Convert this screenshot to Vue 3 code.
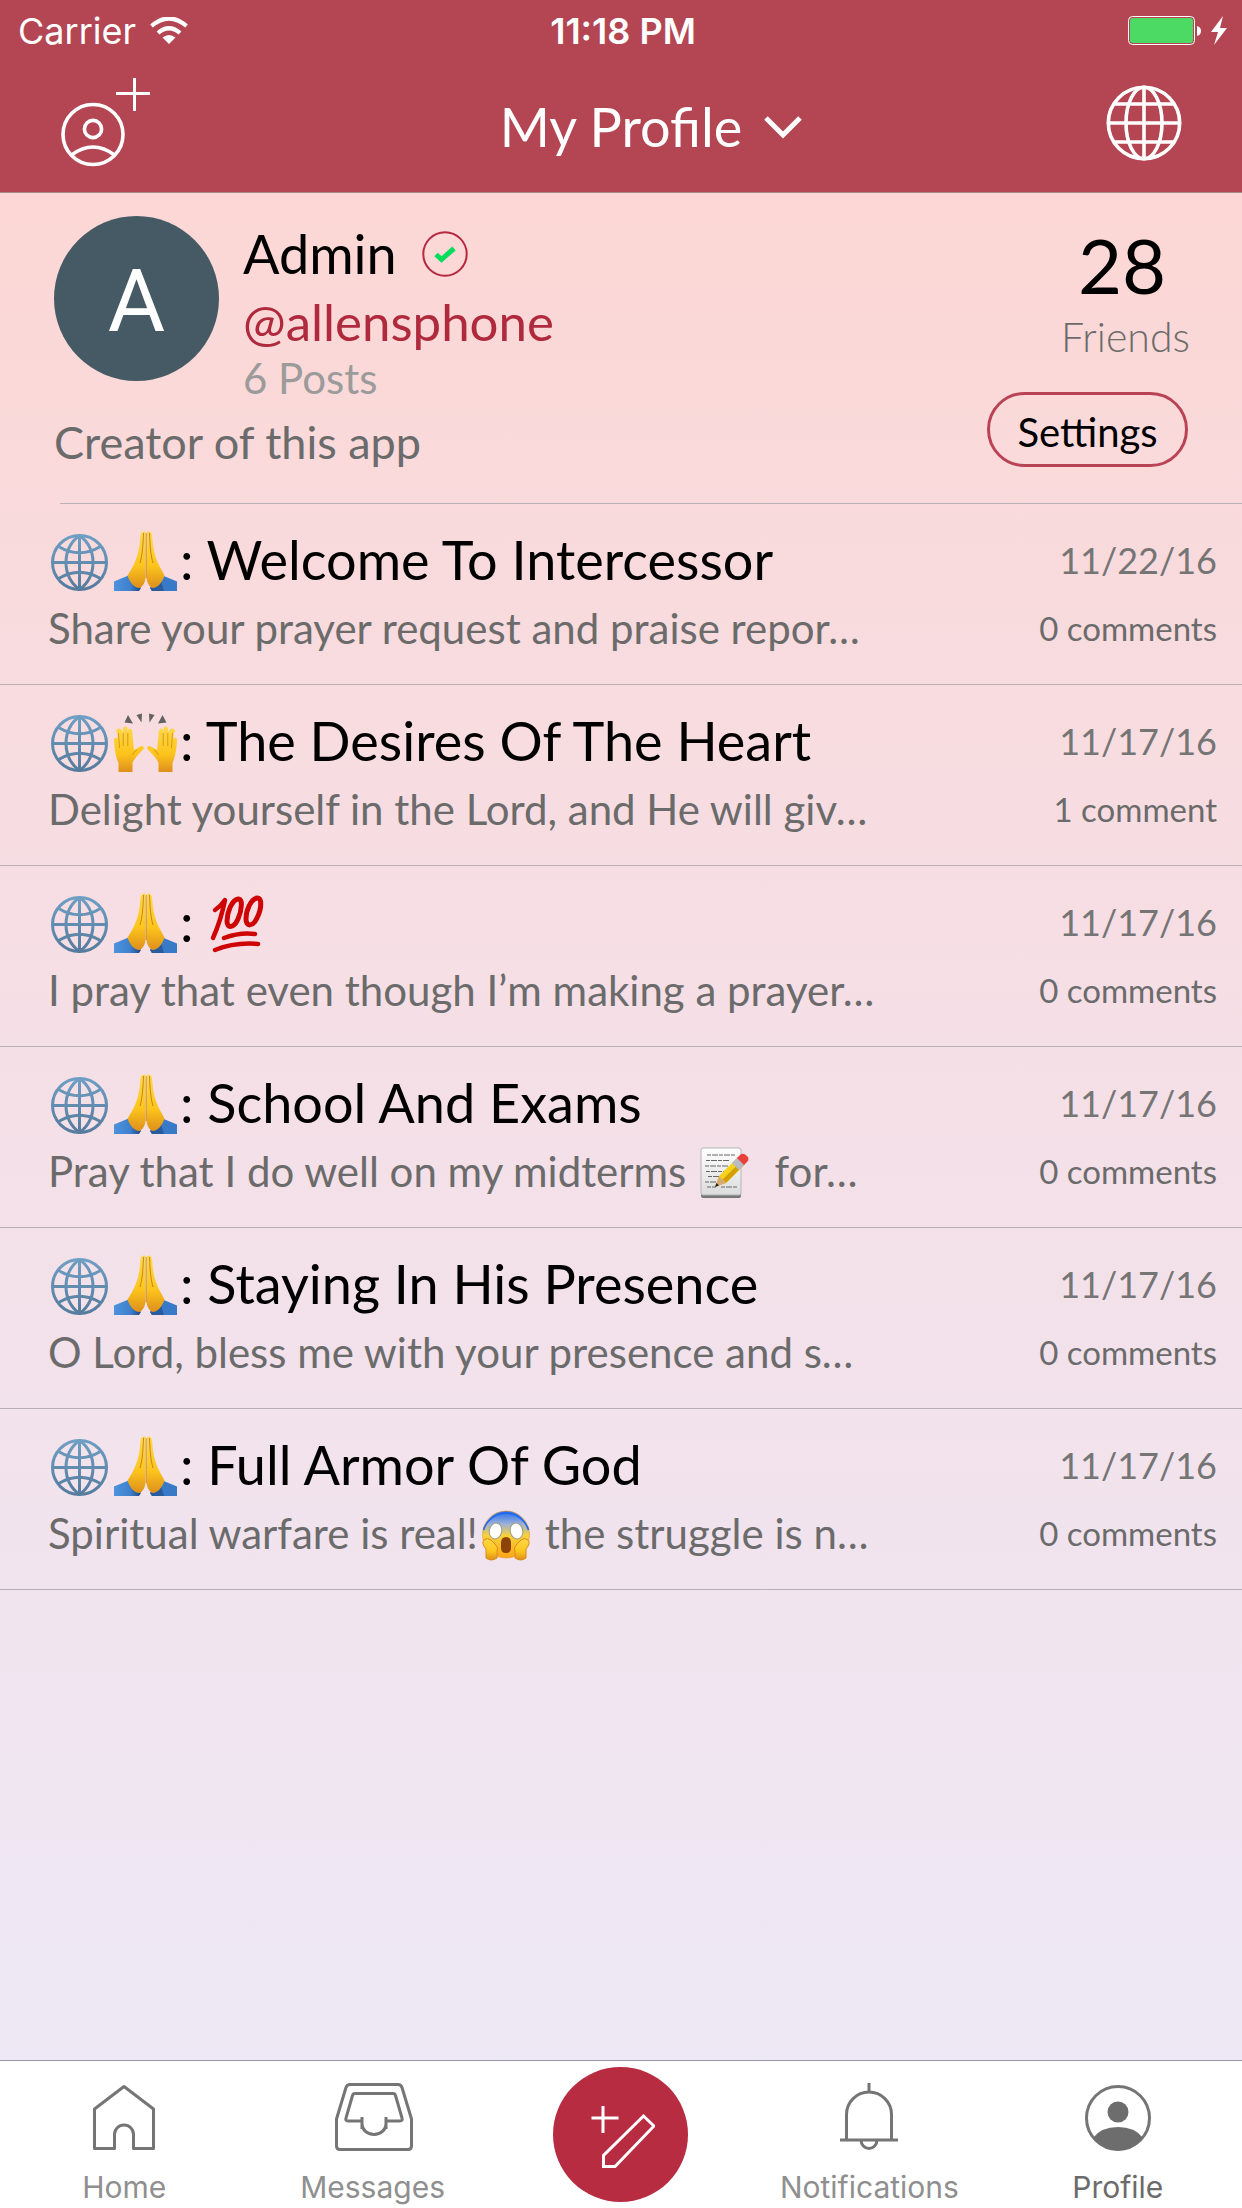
<script setup>
const posts = [
  { kind: 'pray', title: 'Welcome To Intercessor', text: ['Share your prayer request and praise repor…'], date: '11/22/16', comments: '0 comments' },
  { kind: 'praise', title: 'The Desires Of The Heart', text: ['Delight yourself in the Lord, and He will giv…'], date: '11/17/16', comments: '1 comment' },
  { kind: 'pray', title: '', emoji: 'hundred', text: ['I pray that even though I’m making a prayer…'], date: '11/17/16', comments: '0 comments' },
  { kind: 'pray', title: 'School And Exams', text: ['Pray that I do well on my midterms ', ' \u00a0for…'], emojiInText: 'memo', date: '11/17/16', comments: '0 comments' },
  { kind: 'pray', title: 'Staying In His Presence', text: ['O Lord, bless me with your presence and s…'], date: '11/17/16', comments: '0 comments' },
  { kind: 'pray', title: 'Full Armor Of God', text: ['Spiritual warfare is real!', ' the struggle is n…'], emojiInText: 'scream', date: '11/17/16', comments: '0 comments' },
]
</script>

<template>
  <div class="screen">
    <svg class="sprites" aria-hidden="true">
      <defs>
        <linearGradient id="skin" x1="0" y1="0" x2="0" y2="1">
          <stop offset="0" stop-color="#ffd84a" /><stop offset="0.6" stop-color="#fdc51c" /><stop offset="1" stop-color="#dd8f1c" />
        </linearGradient>
        <linearGradient id="sleeve" x1="0" y1="0" x2="1" y2="0">
          <stop offset="0" stop-color="#4d92dc" /><stop offset="0.6" stop-color="#3f80cd" /><stop offset="1" stop-color="#1d4683" />
        </linearGradient>
        <linearGradient id="steel" gradientUnits="userSpaceOnUse" x1="0" y1="7" x2="0" y2="62">
          <stop offset="0" stop-color="#6f9fc4" /><stop offset="1" stop-color="#557b9d" />
        </linearGradient>
        <linearGradient id="face" x1="0" y1="0" x2="0" y2="1">
          <stop offset="0" stop-color="#1f6df0" /><stop offset="0.28" stop-color="#9fb0d8" /><stop offset="0.52" stop-color="#f7d33a" /><stop offset="1" stop-color="#fba51b" />
        </linearGradient>
        <linearGradient id="paper" x1="0" y1="0" x2="0" y2="1">
          <stop offset="0" stop-color="#ffffff" /><stop offset="1" stop-color="#dcdcdc" />
        </linearGradient>
      </defs>
      <symbol id="globe" viewBox="0 0 63 64">
        <g fill="none" stroke="url(#steel)" stroke-width="3">
          <circle cx="31.5" cy="34.500" r="27" />
          <path d="M4.500 34.500H58.500M31.500 7V62" />
          <path d="M31.500 7.300C13.500 21 13.500 48 31.500 61.700M31.500 7.300C49.500 21 49.500 48 31.500 61.700" />
          <path d="M10.500 18.500Q31.500 31 52.500 18.500M10.500 50.500Q31.500 38 52.500 50.500" />
        </g>
      </symbol>
      <symbol id="pray" viewBox="0 0 63 64">
        <path d="M0 53.500L14.500 47.500L27 60L25 63H0z" fill="url(#sleeve)" />
        <path d="M63 53.500L48.500 47.500L36 60L38 63H63z" fill="#397ac8" />
        <path d="M36 60L46 50L50 63H38z" fill="#285c9f" />
        <path d="M31.500 4C28 2.500 26.500 5 26.300 9C25.500 24 22 33 17.500 41L13.500 47.500C16 55 20 59.500 25.500 60C29.500 58 31 54 31.500 50z" fill="url(#skin)" />
        <path d="M33 4C36.500 2.500 38 5 38.200 9C39 24 42.500 33 47 41L50.500 47.500C48 55 44 59.500 38.500 60C34.500 58 33 54 32.500 50z" fill="url(#skin)" />
        <path d="M32.200 5V50M29.500 5C29 20 28 28 26 35M35.500 5C36 20 37 28 39 35" fill="none" stroke="#a85f0c" stroke-width="1" opacity="0.65" />
      </symbol>
      <symbol id="praise" viewBox="0 0 63 64">
        <path d="M14 6L10.500 13.500L19 14.500zM22.500 6L28 4.500L27.500 13.500zM35 4.500L40.500 6L35.500 13.500zM48.500 6L44 14.500L52.500 13.500z" fill="#626262" />
        <g id="hand">
          <path d="M4.500 63V54C1.500 48 0 36 0 30Q1.500 27.500 3.500 30V25Q0 20 5.500 19.500Q8 20 9 24V19Q11.500 15.500 13.500 19V24Q14 18 17 20Q19 22 18.500 27L20 41L27 37Q31 37 29.500 40L23 47Q19 52 18.500 54V63z" fill="url(#skin)" />
          <path d="M4.500 24L5.500 39M9.200 24V37M13.800 24V37M18.500 46Q20 42 23 41" fill="none" stroke="#c57b0d" stroke-width="1" opacity="0.65" />
        </g>
        <use href="#hand" transform="matrix(-1 0 0 1 63 0)" />
      </symbol>
      <symbol id="hundred" viewBox="0 0 63 64">
        <g fill="none" stroke="#cf0505" stroke-linecap="round" stroke-linejoin="round">
          <path d="M9 20Q15 16 19 10Q15 30 7 48" stroke-width="4.500" />
          <path d="M32 9C26 10 21 22 21 31C21 39 28 38 32 29C36 20 37 8 32 9zM51 8C45 9 40 20 40 29C40 37 47 37 51 28C56 18 56 7 51 8z" stroke-width="5" />
          <path d="M18 48Q34 42 49 44M9 60Q29 52 52 54" stroke-width="4.500" />
        </g>
      </symbol>
      <symbol id="memo" viewBox="0 0 52 52">
        <rect x="2" y="2" width="40" height="49" rx="2" fill="#777" />
        <rect x="2" y="1" width="40" height="47" rx="2" fill="url(#paper)" stroke="#b5b5b5" stroke-width="1" />
        <path d="M8 8H36M7 13.500H31M6 19H30M7 24.500H25M9 29.500H23M6 35H20M8 40H17M22 40H38" stroke="#666" stroke-width="1.200" stroke-dasharray="4 1 6 1" />
        <path d="M16 40L20 29L39 10L46 17L27 36z" fill="#f6d21f" />
        <path d="M23.500 32.500L43 13.500L46 17L27 36z" fill="#d3a006" />
        <path d="M16 40L20 29L27 36z" fill="#d7ad74" /><path d="M16 40L17.500 36L20 38.500z" fill="#222" />
        <path d="M33 16L39 10L46 17L40 23z" fill="#b6bcc2" />
        <path d="M38 11L41 8Q44 5 48 9Q51 12 48 15L45 18z" fill="#e8413c" />
      </symbol>
      <symbol id="scream" viewBox="0 0 52 52">
        <circle cx="26" cy="25.500" r="23.500" fill="url(#face)" stroke="#ef961f" stroke-width="0.600" />
        <path d="M3.500 21A23.500 23.500 0 0 1 48.500 21" fill="none" stroke="#1d66ee" stroke-width="1.500" />
        <ellipse cx="15.500" cy="22" rx="6.200" ry="8" transform="rotate(12 15.500 22)" fill="#fff" stroke="#a29b86" />
        <ellipse cx="36.500" cy="22" rx="6.200" ry="8" transform="rotate(-12 36.500 22)" fill="#fff" stroke="#a29b86" />
        <path d="M21 34Q21 28 26 28Q31 28 31 34V39Q31 44 26 44Q21 44 21 39z" fill="#8d4306" />
        <path d="M6 49V40Q1 34 4 31Q7 28 11 31L15 35Q19 39 17 43V49Q11 53 6 49zM46 49V40Q51 34 48 31Q45 28 41 31L37 35Q33 39 35 43V49Q41 53 46 49z" fill="url(#skin)" stroke="#dc8a17" stroke-width="1" />
      </symbol>
    </svg>

    <header class="top">
      <div class="status">
        <span class="carrier">
          Carrier
          <svg width="38" height="28" viewBox="0 0 38 28" aria-label="Wi-Fi">
            <path d="M1.500 9Q19 -6 36.500 9M8 16Q19 6.500 30 16" fill="none" stroke="#fff" stroke-width="4.200" />
            <path d="M12.500 20.500Q19 15.500 25.500 20.500L19 27z" fill="#fff" />
          </svg>
        </span>
        <time class="clock">11:18 PM</time>
        <svg class="battery" width="100" height="30" viewBox="0 0 100 30" aria-label="Battery charging">
          <rect x="0.500" y="0.500" width="66" height="28" rx="4" fill="none" stroke="#fff" />
          <rect x="2" y="2" width="63" height="25" rx="3" fill="#4cd964" />
          <path d="M69 10Q73 11 73 15Q73 19 69 20z" fill="#fff" />
          <path d="M95 0L83 16H90L86 29L99 12H92z" fill="#fff" />
        </svg>
      </div>
      <nav class="bar">
        <button class="icon-btn" aria-label="Add friend">
          <svg width="92" height="92" viewBox="0 0 92 92" fill="none" stroke="#fff" stroke-width="3.600">
            <circle cx="33" cy="57.500" r="30" /><circle cx="33" cy="52" r="8.600" />
            <path d="M11.500 78Q33 62 54.500 78" /><path d="M74.500 1V34M56 16.500H90" stroke-width="3" />
          </svg>
        </button>
        <button class="title">
          My Profile
          <svg width="38" height="24" viewBox="0 0 38 24" fill="none" stroke="#fff" stroke-width="5"><path d="M2 3L19 20L36 3" /></svg>
        </button>
        <button class="icon-btn" aria-label="World">
          <svg width="76" height="76" viewBox="0 0 76 76" fill="none" stroke="#fff" stroke-width="3.600">
            <circle cx="38" cy="38" r="35.700" /><ellipse cx="38" cy="38" rx="18" ry="35.700" />
            <path d="M38 2V74M2 38H74M8 19H68M8 57H68" />
          </svg>
        </button>
      </nav>
    </header>

    <main class="content">
      <section class="profile">
        <div class="who">
          <div class="ident">
            <span class="avatar">A</span>
            <div class="names">
              <h1>
                Admin
                <svg width="46" height="46" viewBox="0 0 46 46" role="img" aria-label="Verified">
                  <circle cx="23" cy="23" r="21.700" fill="none" stroke="#b5283f" stroke-width="2" />
                  <path d="M14 23.500L19.500 28.500L32 17.500" fill="none" stroke="#04dc5c" stroke-width="5" />
                </svg>
              </h1>
              <a class="handle" href="#">@allensphone</a>
              <p class="count">6 Posts</p>
            </div>
          </div>
          <p class="bio">Creator of this app</p>
        </div>
        <div class="side">
          <strong>28</strong>
          <span class="friends">Friends</span>
          <button class="settings">Settings</button>
        </div>
      </section>

      <ul class="posts">
        <li v-for="post in posts" :key="post.text[0]" class="post">
          <div class="line head">
            <h2>
              <svg class="emoji" role="img" aria-label="Public"><use href="#globe" /></svg>
              <svg class="emoji" role="img" :aria-label="post.kind"><use :href="'#' + post.kind" /></svg>
              <span>: {{ post.title }}</span>
              <svg v-if="post.emoji" class="emoji after" role="img" aria-label="100"><use :href="'#' + post.emoji" /></svg>
            </h2>
            <time>{{ post.date }}</time>
          </div>
          <div class="line sub">
            <p>{{ post.text[0] }}<svg v-if="post.emojiInText" class="small-emoji" role="img" :aria-label="post.emojiInText"><use :href="'#' + post.emojiInText" /></svg>{{ post.text[1] }}</p>
            <span class="comments">{{ post.comments }}</span>
          </div>
        </li>
      </ul>
    </main>

    <nav class="tabs">
      <a class="tab" href="#">
        <svg width="84" height="72" viewBox="0 0 84 72"><path d="M42 6.500L71.500 29V68.500H51.500V54.500A9.500 9.500 0 0 0 32.500 54.500V68.500H12.500V29z" /></svg>
        Home
      </a>
      <a class="tab" href="#">
        <svg width="84" height="72" viewBox="0 0 84 72">
          <path d="M19 4.500H67Q70 4.500 71 7.500L80.500 39V66Q80.500 69.500 77 69.500H9Q5.500 69.500 5.500 66V39L15 7.500Q16 4.500 19 4.500z" />
          <path d="M24 13.500H62Q64 13.500 64.500 15.500L71 38Q72 41 69 41H55V44A12 10.500 0 0 1 31 44V41H17Q14 41 15 38L21.500 15.500Q22 13.500 24 13.500zM31 37V49M55 37V49" />
        </svg>
        Messages
      </a>
      <a class="fab" href="#" aria-label="New post">
        <svg width="68" height="68" viewBox="0 0 68 68" fill="none" stroke="#fff" stroke-width="3"><path d="M16 5V32M4.500 17H31.500M16.500 54.500V65.500H28L67 25L56.500 15z" /></svg>
      </a>
      <a class="tab" href="#">
        <svg width="84" height="72" viewBox="0 0 84 72"><path d="M42 3V11M19.500 60V34.500A22.500 22.500 0 0 1 64.500 34.500V60M13 60H71M34 60A8 8.500 0 0 0 50 60" /></svg>
        Notifications
      </a>
      <a class="tab active" href="#">
        <svg width="84" height="72" viewBox="0 0 84 72">
          <circle cx="42" cy="38" r="31.500" />
          <g class="solid"><circle cx="42" cy="32" r="10.500" /><path d="M17 58Q25 47 42 47Q59 47 67 58Q57 70.500 42 70.500Q27 70.500 17 58z" /></g>
        </svg>
        Profile
      </a>
    </nav>
  </div>
</template>

<style>
body { margin: 0; }
</style>

<style scoped>
.screen {
  display: flex;
  flex-direction: column;
  min-height: 100vh;
  font-family: Lato, "Liberation Sans", sans-serif;
  color: #000;
}
.sprites { position: absolute; width: 0; height: 0; }
h1, h2, p, ul { margin: 0; padding: 0; font-weight: 400; }
button { padding: 0; border: 0; background: none; color: inherit; font: inherit; cursor: pointer; }
a { color: inherit; text-decoration: none; }
svg { display: block; flex: none; }

.top { background: #b44653; color: #fff; border-bottom: 1px solid #a58a8a; }
.status {
  display: grid;
  grid-template-columns: 1fr auto 1fr;
  align-items: center;
  height: 62px;
  padding: 0 14px 0 18px;
  font: 400 36px/62px Inter, "Liberation Sans", sans-serif;
}
.carrier { display: flex; align-items: center; gap: 14px; }
.clock { font-weight: 600; }
.battery { justify-self: end; }
.bar {
  display: flex;
  align-items: center;
  justify-content: space-between;
  height: 130px;
  padding: 0 60px;
}
.icon-btn { display: flex; width: 92px; padding-bottom: 8px; justify-content: flex-end; }
.title {
  display: flex;
  align-items: center;
  gap: 22px;
  padding-left: 60px;
  font-size: 54px;
  line-height: 64px;
}

.content { flex: 1; background: linear-gradient(#fcd7d5, #f5dfe6 45%, #ede8f5); }
.profile {
  display: flex;
  justify-content: space-between;
  padding: 23px 54px 0;
  height: 287px;
}
.ident { display: flex; gap: 24px; }
.avatar {
  width: 165px;
  height: 165px;
  border-radius: 50%;
  background: #465a65;
  color: #fff;
  font: 400 88px/170px Roboto, sans-serif;
  text-align: center;
}
.names { padding-top: 6px; }
h1 { display: flex; align-items: center; gap: 25px; font-size: 54px; line-height: 64px; }
.handle { display: block; color: #b02a3d; font-size: 51px; line-height: 72px; }
.count { color: #9b9b9b; font-size: 42px; line-height: 40px; }
.bio { padding-top: 16px; color: #6b6b6b; font-size: 45px; line-height: 56px; }
.side { display: flex; flex-direction: column; align-items: center; width: 201px; }
.side strong { padding-left: 69px; font-size: 76px; font-weight: 400; line-height: 98px; }
.friends { padding-left: 76px; color: #6b6b6b; font-size: 41px; font-weight: 300; line-height: 46px; }
.settings {
  width: 201px;
  height: 75px;
  margin-top: 32px;
  padding-top: 4px;
  border: 3px solid #b94355;
  border-radius: 38px;
  font-size: 40px;
}

.posts { list-style: none; }
.posts::before { content: ""; display: block; height: 1px; margin-left: 60px; background: #b9b0b3; }
.post { padding: 24px 25px 28px 48px; border-bottom: 1px solid #b9b0b3; }
.line { display: flex; align-items: center; justify-content: space-between; }
.head { height: 64px; }
.head h2 { display: flex; align-items: center; gap: 3px; font-size: 54px; line-height: 64px; }
.emoji { width: 63px; height: 64px; }
.after { margin-left: 9px; }
.head time { color: #757575; font-size: 36px; font-weight: 400; }
.sub { height: 56px; margin-top: 8px; }
.sub p { color: #6b6b6b; font-size: 42px; line-height: 56px; white-space: nowrap; }
.small-emoji { display: inline-block; width: 52px; height: 52px; margin: 0 2px; vertical-align: -12px; }
.comments { color: #6b6b6b; font-size: 33px; }

.tabs {
  display: grid;
  grid-template-columns: repeat(5, 1fr);
  border-top: 1px solid #9f98a3;
  background: #fff;
  font: 400 30px/36px Inter, "Liberation Sans", sans-serif;
}
.tab {
  display: flex;
  flex-direction: column;
  align-items: center;
  gap: 17px;
  padding: 19px 0 3px;
  color: #8f8f8f;
}
.tab svg { fill: none; stroke: #757575; stroke-width: 3; stroke-linejoin: round; }
.tab .solid { fill: #6d6d6d; stroke: none; }
.active { color: #6b6b6b; }
.fab {
  display: flex;
  align-items: center;
  justify-content: center;
  place-self: center;
  width: 135px;
  height: 135px;
  border-radius: 50%;
  background: #b82c42;
}
</style>
